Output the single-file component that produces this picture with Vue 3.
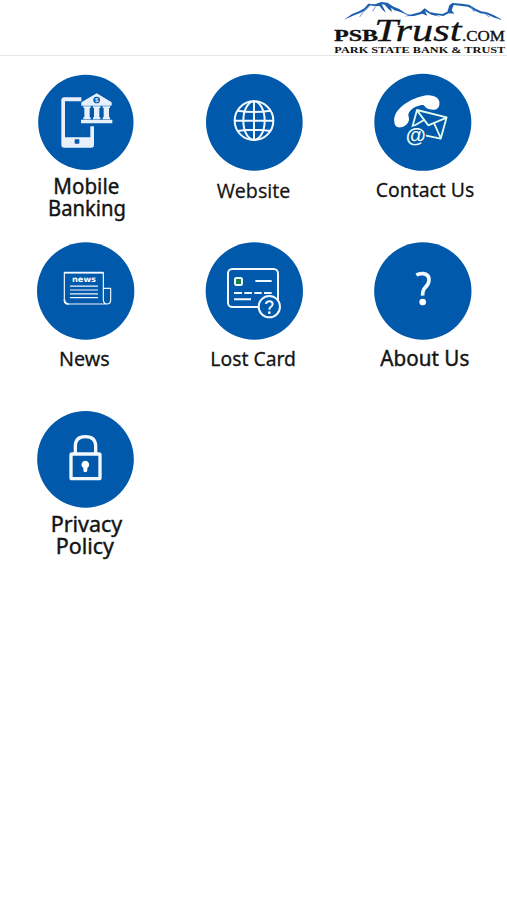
<script setup>
const tiles = [
  { id: 'mobile', x: 30, y: 9, cx: 167.5, cy: 172, r: 143, face: 'humanist', lines: [['Mobile', 70, 388, 198], ['Banking', 54, 453, 234]] },
  { id: 'web', x: 29, y: 9, cx: 169, cy: 172, r: 145, face: 'open', lines: [['Website', 56, 398, 221]] },
  { id: 'contact', x: 28, y: 9, cx: 170.5, cy: 172, r: 145.5, face: 'lato', lines: [['Contact Us', 29, 397, 296]] },
  { id: 'news', x: 30, y: 10, cx: 167, cy: 168, r: 146, face: 'lato', lines: [['News', 87, 394, 152]] },
  { id: 'card', x: 29, y: 10, cx: 169, cy: 168, r: 146, face: 'lato', lines: [['Lost Card', 37, 394, 257]] },
  { id: 'about', x: 28, y: 10, cx: 170.5, cy: 168, r: 146, face: 'humanist', lines: [['About Us', 43, 394, 267]] },
  { id: 'privacy', x: 30, y: 11, cx: 166.5, cy: 163, r: 145, face: 'humanist', lines: [['Privacy', 62, 382, 215], ['Policy', 77, 446, 175]] },
]
</script>

<template>
  <div class="screen">
    <header class="bar">
      <svg class="logo" viewBox="0 0 546 165" aria-label="PSBTrust.com">
        <g class="peaks">
          <path d="M56 60 L80 43 L102 34 L118 25 L130 11 L150 13 L169 6 L187 8 L206 20 L224 28 L240 39 L263 47 L242 43 L224 35 L208 31 L198 23 L201 36 L188 25 L179 14 L170 13 L183 38 L172 29 L164 18 L150 19 L136 16 L122 31 L105 39 L84 47Z" />
          <path d="M238 49 L264 42 L286 36 L299 25 L314 36 L328 39 L352 42 L367 35 L373 16 L382 9 L410 11 L432 14 L452 26 L468 34 L485 37 L504 44 L533 60 L508 53 L485 43 L466 40 L447 31 L429 20 L405 17 L386 15 L380 31 L388 41 L371 40 L355 48 L332 44 L346 50 L319 44 L300 33 L307 47 L292 41 L267 48Z" />
        </g>
        <g class="slopes">
          <path d="M133 18 L112 39 L104 51 M151 21 L143 34 M438 22 L448 36 M478 40 L494 52" />
        </g>
        <text class="psb" x="27" y="124" textLength="132" lengthAdjust="spacingAndGlyphs">PSB</text>
        <text class="trust" x="148" y="124" textLength="262" lengthAdjust="spacingAndGlyphs">Trust</text>
        <text class="com" x="411" y="124" textLength="129" lengthAdjust="spacingAndGlyphs">.COM</text>
        <text class="bank" x="28" y="159" textLength="513" lengthAdjust="spacingAndGlyphs">PARK STATE BANK &amp; TRUST</text>
      </svg>
    </header>

    <main class="grid">
      <a v-for="t in tiles" :key="t.id" class="tile">
        <svg viewBox="0 0 169 169" class="art">
          <g :transform="`translate(${t.x} ${t.y}) scale(.333333)`">
            <circle class="disc" :cx="t.cx" :cy="t.cy" :r="t.r" />

            <g v-if="t.id === 'mobile'" class="pale">
              <path d="M103 97 H154 V109 H105 V217 H181 V184 H192 V240 Q192 248 184 248 H103 Q94 248 94 240 V106 Q94 97 103 97Z" />
              <rect class="disc" x="134" y="223" width="14" height="13" rx="2" />
              <path d="M154 112 L200 85 L245 112 V122 H154Z M160 124 h22 v5 h-3 v28 h3 v6 h-22 v-6 h3 v-28 h-3Z M189 124 h22 v5 h-3 v28 h3 v6 h-22 v-6 h3 v-28 h-3Z M218 124 h22 v5 h-3 v28 h3 v6 h-22 v-6 h3 v-28 h-3Z M153 164 H247 V175 H153Z" />
              <circle class="disc" cx="200" cy="105" r="10" />
              <text class="dollar" x="200" y="111" text-anchor="middle">$</text>
            </g>

            <g v-else-if="t.id === 'web'" class="line" stroke-width="6">
              <circle cx="168" cy="167" r="58" />
              <ellipse cx="168" cy="167" rx="32" ry="58" />
              <path d="M168 108 V226 M109 167 H227 M119 137 Q168 145 217 137 M119 198 Q168 190 217 198" />
            </g>

            <g v-else-if="t.id === 'contact'">
              <path class="solid" d="M85 170 C80 136 126 102 174 92 C203 87 224 99 220 119 C218 134 204 137 188 132 C174 128 179 119 166 120 C145 124 128 137 127 149 C127 157 132 160 127 171 C121 183 106 190 94 186 C88 184 85 177 85 170Z" />
              <path class="line mint" stroke-width="5.5" d="M138 190 L153 135 L242 157 L224 221 L177 211 M153 136 L187 181 L242 158 M142 184 L174 165 M204 174 L224 219" />
              <circle class="disc" cx="150" cy="213" r="30" />
              <text class="at" x="149" y="230" text-anchor="middle" textLength="60" lengthAdjust="spacingAndGlyphs">@</text>
            </g>

            <g v-else-if="t.id === 'news'" class="line" stroke-width="3.5">
              <path d="M103 113 H220 V195 Q221 207 232 207 H113 Q103 207 103 196Z M220 160 H242 V195 Q242 207 231 207" />
              <path d="M103 113 H220 M103 194 Q104 207 116 207" stroke-width="5" />
              <path d="M120 153.500 H204 M120 165 H204 M120 176.500 H204 M120 188 H204" />
              <text class="masthead" x="126" y="142" textLength="72" lengthAdjust="spacingAndGlyphs">news</text>
            </g>

            <g v-else-if="t.id === 'card'" class="line" stroke-width="6">
              <rect x="90" y="102" width="150" height="114" rx="13" />
              <rect class="chip" x="111" y="129" width="21" height="21" rx="4" />
              <path d="M172 138 H221" />
              <path d="M108 174 H132 M139 174 H162 M169 174 H191 M198 174 H221 M108 193 H159" />
              <circle class="badge" cx="214" cy="215" r="32" />
              <path d="M204 207 Q205 199 214 199 Q224 199 224 207 Q224 213 217 217 Q214 219 214 224" />
              <circle class="solid dot" cx="214" cy="233" r="4" />
            </g>

            <g v-else-if="t.id === 'about'">
              <path class="line" stroke-width="11" d="M151 120 Q160 115 171 116 Q190 118 189 136 Q188 148 178 157 Q169 166 170 182" />
              <circle class="solid" cx="170" cy="201" r="10" />
            </g>

            <g v-else class="line" stroke-width="10">
              <rect x="123" y="147" width="87" height="74" rx="3" />
              <path d="M136 147 V124 Q136 95 166 95 Q197 95 197 124 V147" />
              <path class="solid dot" d="M166 167 a12 12 0 0 1 6 22 v7 a6 6 0 0 1 -12 0 v-7 a12 12 0 0 1 6 -22Z" />
            </g>

            <text v-for="l in t.lines" :key="l[0]" :class="['label', t.face]" :x="l[1]" :y="l[2]" :textLength="l[3]" lengthAdjust="spacingAndGlyphs">{{ l[0] }}</text>
          </g>
        </svg>
      </a>
    </main>
  </div>
</template>

<style>
body { background: #fff; }
</style>

<style scoped>
.screen { width: 507px; height: 900px; background: #fff; }
.bar { display: flex; justify-content: flex-end; box-sizing: border-box; height: 56px; border-bottom: 1px solid #e6e6e6; }
.logo { width: 182px; height: 55px; display: block; }
.peaks { fill: #1d5fae; }
.slopes { fill: none; stroke: #6f9bd0; stroke-width: 3px; }
.logo text { fill: #111; font-family: "Liberation Serif", serif; }
.logo .psb { font-size: 48px; font-weight: 700; stroke: #111; stroke-width: 1px; }
.logo .trust { font-size: 92px; font-style: italic; stroke: #111; stroke-width: .8px; }
.logo .com { font-size: 42px; stroke: #111; stroke-width: 1px; }
.logo .bank { font-size: 22px; font-weight: 700; }
.grid { display: grid; grid-template-columns: repeat(3, 169px); grid-auto-rows: 169px; }
.tile { display: block; }
.art { display: block; width: 169px; height: 169px; overflow: visible; }
.disc { fill: #0059aa; }
.pale { fill: #e8f1fb; }
.solid { fill: #fff; }
.line { fill: none; stroke: #f2f8ff; stroke-linejoin: round; }
.mint { stroke: #e2fbef; }
.dot { stroke: none; }
.chip { fill: #16804d; }
.badge { fill: #0059aa; }
.dollar { font: 700 18px "Liberation Sans", sans-serif; }
.at { fill: #effdf5; font: 700 58px "Liberation Sans", sans-serif; }
.masthead { fill: #fff; font: 700 24px "DejaVu Sans", sans-serif; stroke: none; }
.label { fill: #141414; stroke: #141414; stroke-width: .8px; }
.humanist { font: 63px "Noto Sans", sans-serif; stroke-width: 1.2px; }
.open { font: 60px "Open Sans", sans-serif; }
.lato { font: 59px "Noto Sans", sans-serif; }
</style>
